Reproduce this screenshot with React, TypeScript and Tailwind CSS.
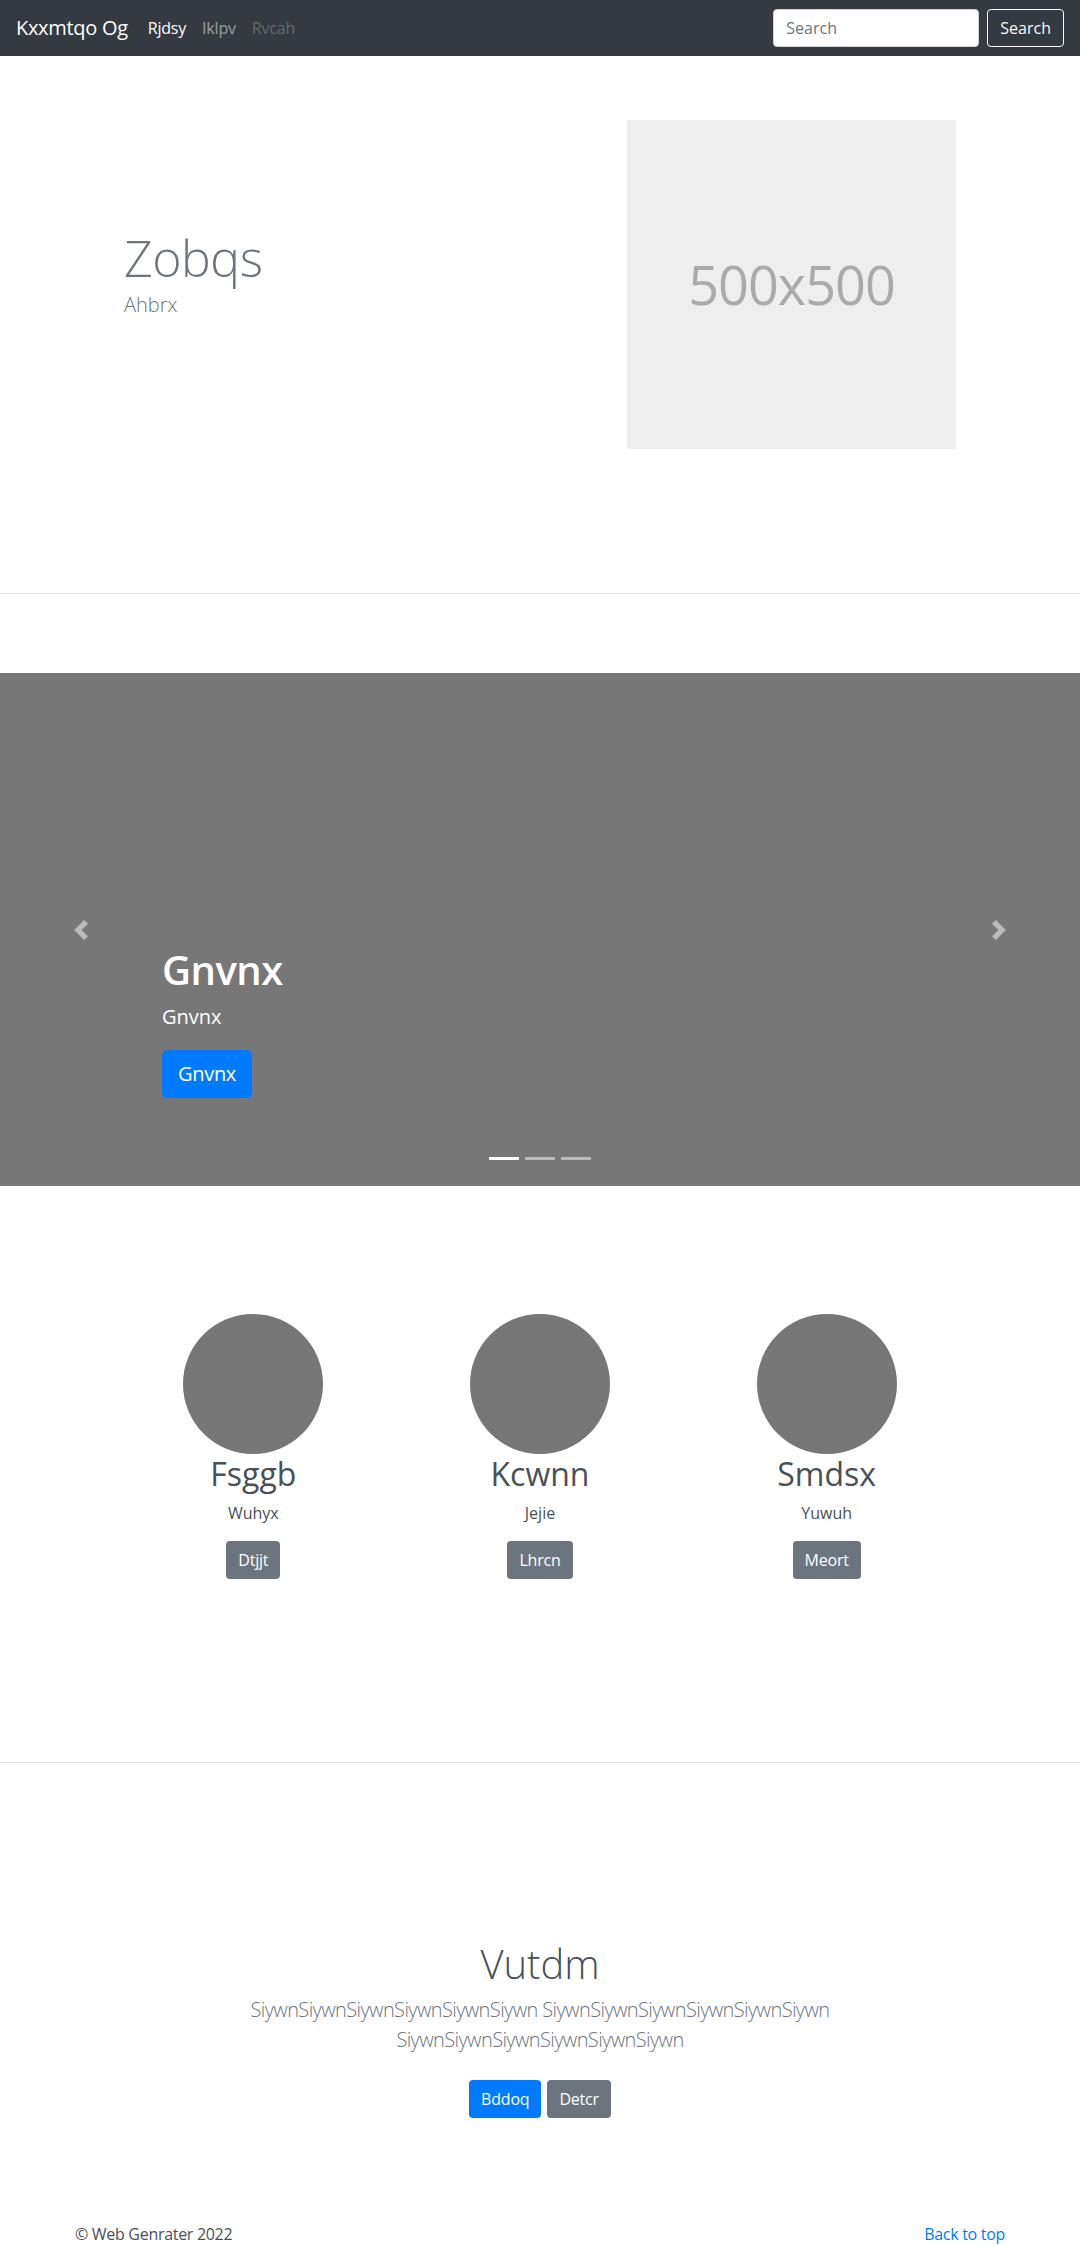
import React from 'react';

const members = [
  { name: 'Fsggb', role: 'Wuhyx', cta: 'Dtjjt' },
  { name: 'Kcwnn', role: 'Jejie', cta: 'Lhrcn' },
  { name: 'Smdsx', role: 'Yuwuh', cta: 'Meort' },
];

function Chevron({ dir }: { dir: 'prev' | 'next' }) {
  return (
    <svg width="20" height="20" viewBox="0 0 8 8" fill="#fff" className="opacity-50">
      {dir === 'prev' ? (
        <path d="M5.25 0l-4 4 4 4 1.5-1.5L4.25 4l2.5-2.5L5.25 0z" />
      ) : (
        <path d="M2.75 0l-1.5 1.5L3.75 4l-2.5 2.5L2.75 8l4-4-4-4z" />
      )}
    </svg>
  );
}

export default function App() {
  return (
    <div className="bg-white font-['Open_Sans','Noto_Sans',sans-serif] text-[#495057]">
      {/* navbar */}
      <nav className="flex h-14 items-center bg-[#343a40] px-4">
        <span className="mr-3 text-xl leading-[30px] tracking-[-0.3px] text-white">Kxxmtqo Og</span>
        <a className="px-2 text-base tracking-[-0.2px] text-white">Rjdsy</a>
        <a className="px-2 text-base tracking-[-0.2px] text-white/50">Iklpv</a>
        <a className="px-2 text-base tracking-[-0.2px] text-white/25">Rvcah</a>
        <form className="ml-auto flex items-center">
          <input
            className="mr-2 h-[38px] w-[206px] rounded border border-[#ced4da] bg-white px-3 text-base text-[#495057] outline-0 placeholder:text-[#6c757d]"
            placeholder="Search"
          />
          <button className="h-[38px] rounded border border-[#f8f9fa] px-3 text-base text-[#f8f9fa]" type="button">
            Search
          </button>
        </form>
      </nav>

      {/* hero */}
      <section className="pt-16">
        <div className="flex pl-[124px]">
          <div className="w-[503px] pt-[108px]">
            <h1 className="text-[50px] leading-[60px] font-light tracking-[-0.5px] text-[#6c757d]">Zobqs</h1>
            <p className="mt-[2px] text-xl leading-[30px] font-light text-[#6c757d]">Ahbrx</p>
          </div>
          <div className="flex h-[329px] w-[329px] items-center justify-center bg-[#eeeeee]">
            <span className="text-[54px] tracking-[-1px] text-[#aaaaaa]">500x500</span>
          </div>
        </div>
        <hr className="mt-[144px] border-t border-[#e6e6e6]" />
      </section>

      {/* carousel */}
      <section className="relative mt-[79px] h-[513px] bg-[#777777]">
        <div className="absolute top-0 bottom-0 left-0 flex w-[162px] items-center justify-center">
          <Chevron dir="prev" />
        </div>
        <div className="absolute top-0 right-0 bottom-0 flex w-[162px] items-center justify-center">
          <Chevron dir="next" />
        </div>
        <div className="absolute bottom-[88px] left-[162px] flex flex-col items-start text-white">
          <h1 className="text-[40px] leading-[48px] font-semibold tracking-[-0.5px]">Gnvnx</h1>
          <p className="mt-2 text-xl leading-[30px]">Gnvnx</p>
          <a className="mt-[18px] flex h-12 items-center rounded-[5px] bg-[#007bff] px-4 text-xl tracking-[-0.3px] text-white">Gnvnx</a>
        </div>
        <div className="absolute bottom-[26px] left-0 right-0 flex justify-center gap-[6px]">
          <span className="h-[3px] w-[30px] bg-white" />
          <span className="h-[3px] w-[30px] bg-white/50" />
          <span className="h-[3px] w-[30px] bg-white/50" />
        </div>
      </section>

      {/* team */}
      <section className="pt-[128px]">
        <div className="mx-auto grid w-[860px] grid-cols-3">
          {members.map((m) => (
            <div key={m.name} className="flex flex-col items-center">
              <div className="h-[140px] w-[140px] rounded-full bg-[#777777]" />
              <h2 className="mt-px text-[32px] leading-[38px]">{m.name}</h2>
              <p className="mt-2 text-base leading-6">{m.role}</p>
              <a className="mt-4 flex h-[38px] items-center rounded bg-[#6c757d] px-3 text-base tracking-[-0.2px] text-white">{m.cta}</a>
            </div>
          ))}
        </div>
        <hr className="mt-[183px] border-t border-[#e6e6e6]" />
      </section>

      {/* call to action */}
      <section className="flex flex-col items-center pt-[177px]">
        <h1 className="text-[40px] leading-[48px] font-light">Vutdm</h1>
        <p className="mt-[7px] w-[700px] text-center text-xl leading-[30px] font-light tracking-[-0.6px] text-[#6c757d]">
          SiywnSiywnSiywnSiywnSiywnSiywn SiywnSiywnSiywnSiywnSiywnSiywn SiywnSiywnSiywnSiywnSiywnSiywn
        </p>
        <div className="mt-[25px] flex gap-[6px]">
          <a className="flex h-[38px] items-center rounded bg-[#007bff] px-3 text-base tracking-[-0.2px] text-white">Bddoq</a>
          <a className="flex h-[38px] items-center rounded bg-[#6c757d] px-3 text-base tracking-[-0.2px] text-white">Detcr</a>
        </div>
      </section>

      {/* footer */}
      <footer className="mt-[104px] flex justify-between px-[75px] text-base leading-6 tracking-[-0.3px]">
        <p>© Web Genrater 2022</p>
        <a className="text-[#007bff]">Back to top</a>
      </footer>
    </div>
  );
}
